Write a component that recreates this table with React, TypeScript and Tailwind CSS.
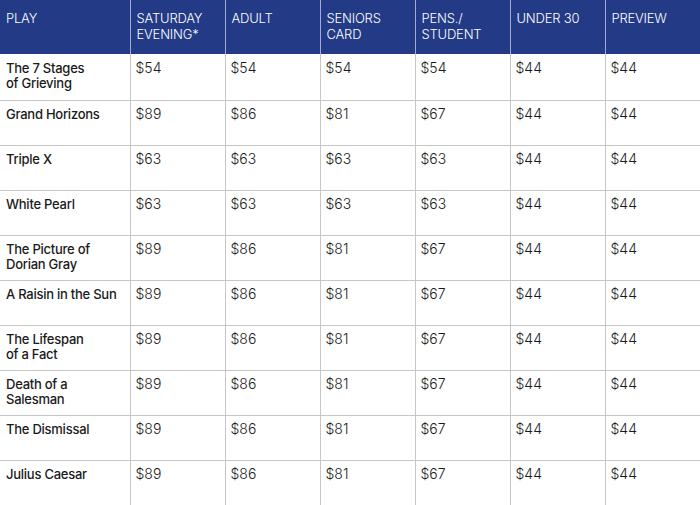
import React from 'react';

const headerLines: string[][] = [
  ['PLAY'],
  ['SATURDAY', 'EVENING*'],
  ['ADULT'],
  ['SENIORS', 'CARD'],
  ['PENS./', 'STUDENT'],
  ['UNDER 30'],
  ['PREVIEW'],
];

const rows: { play: string[]; prices: string[] }[] = [
  { play: ['The 7 Stages', 'of Grieving'], prices: ['$54', '$54', '$54', '$54', '$44', '$44'] },
  { play: ['Grand Horizons'], prices: ['$89', '$86', '$81', '$67', '$44', '$44'] },
  { play: ['Triple X'], prices: ['$63', '$63', '$63', '$63', '$44', '$44'] },
  { play: ['White Pearl'], prices: ['$63', '$63', '$63', '$63', '$44', '$44'] },
  { play: ['The Picture of', 'Dorian Gray'], prices: ['$89', '$86', '$81', '$67', '$44', '$44'] },
  { play: ['A Raisin in the Sun'], prices: ['$89', '$86', '$81', '$67', '$44', '$44'] },
  { play: ['The Lifespan', 'of a Fact'], prices: ['$89', '$86', '$81', '$67', '$44', '$44'] },
  { play: ['Death of a', 'Salesman'], prices: ['$89', '$86', '$81', '$67', '$44', '$44'] },
  { play: ['The Dismissal'], prices: ['$89', '$86', '$81', '$67', '$44', '$44'] },
  { play: ['Julius Caesar'], prices: ['$89', '$86', '$81', '$67', '$44', '$44'] },
];

export default function App() {
  return (
    <div className="w-[700px] h-[505px] overflow-hidden bg-white font-['Inter',sans-serif] text-[13px] leading-[15px] text-[#1a1a1a]">
      <table className="w-[700px] table-fixed border-collapse">
        <colgroup>
          <col className="w-[130px]" />
          <col className="w-[95px]" />
          <col className="w-[95px]" />
          <col className="w-[95px]" />
          <col className="w-[95px]" />
          <col className="w-[95px]" />
          <col className="w-[95px]" />
        </colgroup>
        <thead>
          <tr className="h-[54px] bg-[#233a86] text-white">
            {headerLines.map((lines, i) => (
              <th
                key={i}
                className={`align-top text-left font-light tracking-[-0.2px] px-[6px] pt-[10px] leading-[16px] text-[13px] ${
                  i > 0 ? 'border-l border-[#a3abd4]' : ''
                }`}
              >
                {lines.map((l) => (
                  <div key={l}>{l}</div>
                ))}
              </th>
            ))}
          </tr>
        </thead>
        <tbody>
          {rows.map((r, ri) => (
            <tr key={ri} className={ri > 0 ? 'h-[45px] border-t border-[#c6c6c6]' : 'h-[46px]'}>
              <td className={`align-top px-[6px] font-medium tracking-[-0.25px] ${ri > 0 ? 'pt-[6px]' : 'pt-[7px]'}`}>
                {r.play.map((l) => (
                  <div key={l}>{l}</div>
                ))}
              </td>
              {r.prices.map((p, pi) => (
                <td
                  key={pi}
                  className={`align-top px-[5px] border-l border-[#c6c6c6] text-[14px] font-light ${ri > 0 ? 'pt-[5px]' : 'pt-[6px]'}`}
                >
                  {p}
                </td>
              ))}
            </tr>
          ))}
        </tbody>
      </table>
    </div>
  );
}
